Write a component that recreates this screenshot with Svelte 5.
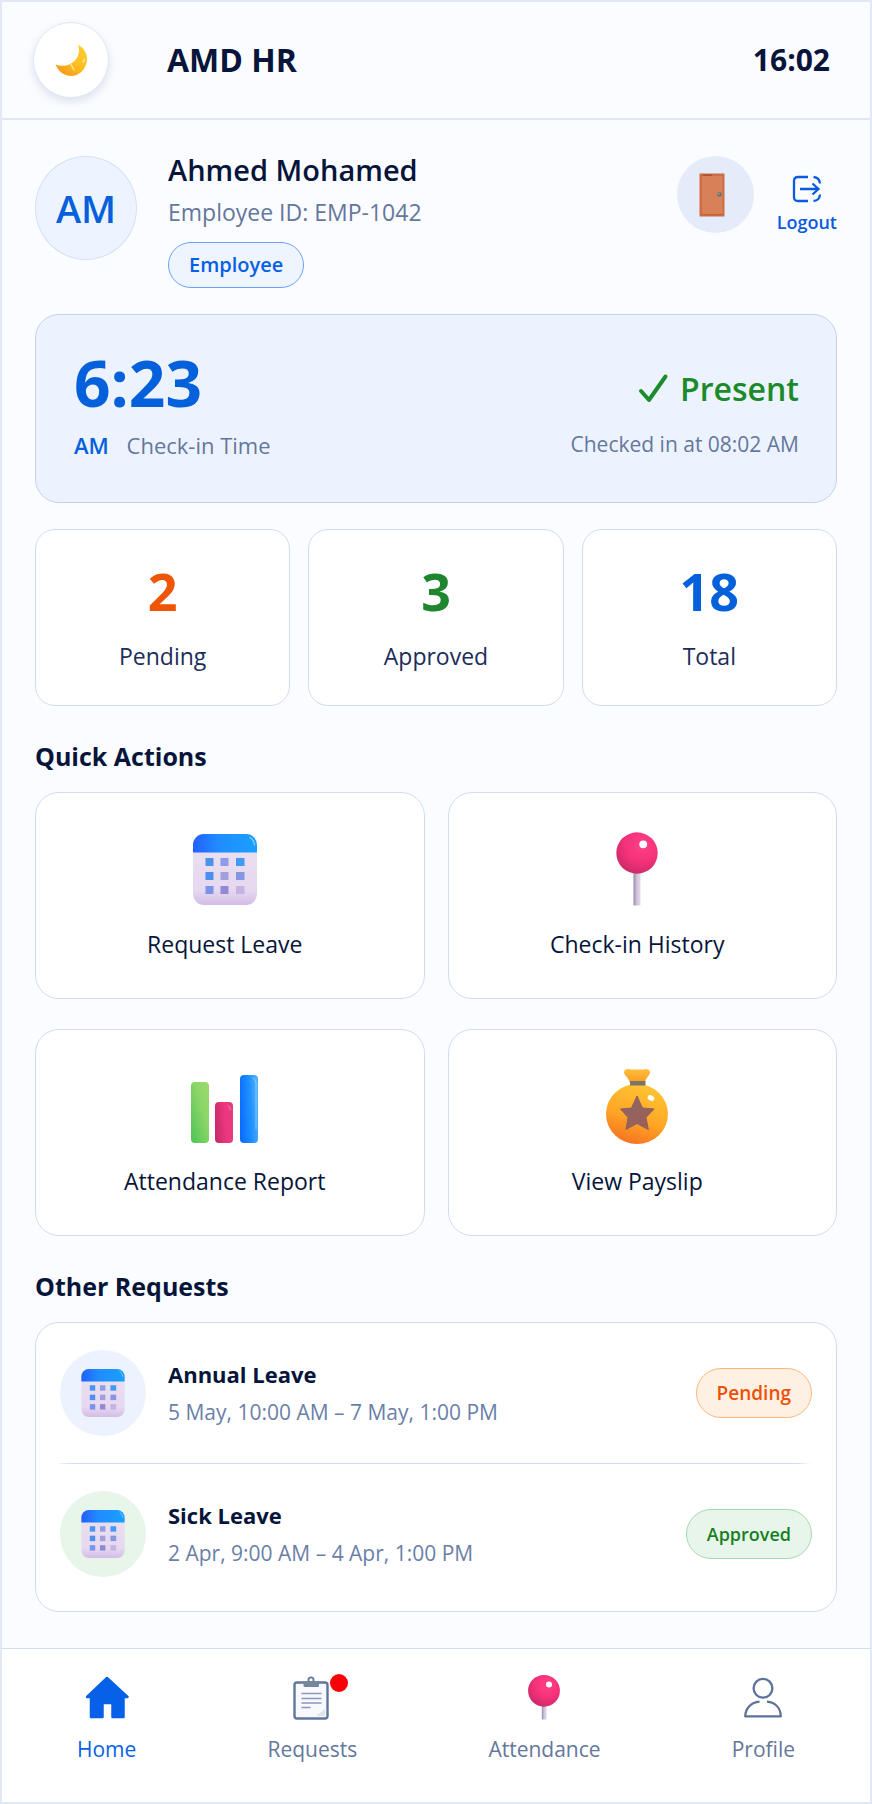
<script lang="ts">
  type Tone = "blue" | "green" | "orange";

  const user = { initials: "AM", name: "Ahmed Mohamed", id: "EMP-1042", role: "Employee" };

  const stats: { value: number; label: string; tone: Tone }[] = [
    { value: 2, label: "Pending", tone: "orange" },
    { value: 3, label: "Approved", tone: "green" },
    { value: 18, label: "Total", tone: "blue" },
  ];

  const actions = [
    { icon: "calendar", label: "Request Leave" },
    { icon: "pin", label: "Check-in History" },
    { icon: "bars", label: "Attendance Report" },
    { icon: "bag", label: "View Payslip" },
  ];

  const requests: { title: string; period: string; status: string; tone: Tone; badge: Tone }[] = [
    { title: "Annual Leave", period: "5 May, 10:00 AM – 7 May, 1:00 PM", status: "Pending", tone: "blue", badge: "orange" },
    { title: "Sick Leave", period: "2 Apr, 9:00 AM – 4 Apr, 1:00 PM", status: "Approved", tone: "green", badge: "green" },
  ];

  const tabs = [
    { icon: "home", label: "Home", alert: false },
    { icon: "clipboard", label: "Requests", alert: true },
    { icon: "pin-small", label: "Attendance", alert: false },
    { icon: "profile", label: "Profile", alert: false },
  ];

  let activeTab = $state("Home");
</script>

{#snippet calendar(width: number, height: number)}
  <svg {width} {height} viewBox="0 0 64 71" aria-hidden="true">
    <rect width="64" height="71" rx="11" fill="url(#cal-body)" />
    <path d="M0 18.500V11A11 11 0 0 1 11 0H53A11 11 0 0 1 64 11V18.500Z" fill="url(#cal-top)" />
    <path d="M57 3.500Q61 6 61.500 11" fill="none" stroke="#8fd0ff" stroke-width="1.200" stroke-linecap="round" />
    <rect x="12.500" y="24" width="8" height="8" fill="#4a94ee" />
    <rect x="27.500" y="24" width="8" height="8" fill="#8c9ce6" />
    <rect x="43" y="24" width="8.500" height="8" fill="#3f9bf6" />
    <rect x="12.500" y="38" width="8" height="8" fill="#4c8fee" />
    <rect x="27.500" y="38" width="8" height="8" fill="#a39fdc" />
    <rect x="43" y="38" width="8.500" height="8" fill="#8795e2" />
    <rect x="12.500" y="52" width="8" height="8" fill="#7a93ea" />
    <rect x="27.500" y="52" width="8" height="8" fill="#9288d6" />
    <rect x="43" y="52" width="8.500" height="8" fill="#c5b3e0" />
  </svg>
{/snippet}

{#snippet icon(name: string)}
  {#if name === "calendar"}
    {@render calendar(64, 71)}
  {:else if name === "pin"}
    <svg width="42" height="74" viewBox="0 0 42 74" aria-hidden="true">
      <rect x="17.500" y="38" width="7" height="35.500" rx="1" fill="url(#stem)" />
      <circle cx="21" cy="21" r="20.700" fill="url(#pin-head)" />
      <circle cx="27.200" cy="12.300" r="3.900" fill="#fff" />
    </svg>
  {:else if name === "bars"}
    <svg width="68" height="74" viewBox="0 0 68 74" aria-hidden="true">
      <rect x="0" y="13" width="18" height="61" rx="4" fill="url(#bar-green)" />
      <rect x="24" y="33" width="18" height="41" rx="4" fill="url(#bar-pink)" />
      <rect x="49" y="6" width="18" height="68" rx="4" fill="url(#bar-blue)" />
      <path d="M37 36.500Q39.500 37 39.500 41M62 9Q65 10 65 14V60" fill="none" stroke="#fff" stroke-opacity=".35" stroke-linecap="round" />
    </svg>
  {:else if name === "bag"}
    <svg width="62" height="75" viewBox="0 0 62 75" aria-hidden="true">
      <path d="M24 14C23 9 17.500 6 18 3C18.500 0 22 -0.500 24.500 .5L38 .5C40 -0.500 43.500 0 44 3C44.500 6 39 9 39 14Z" fill="url(#bag-neck)" />
      <ellipse cx="31" cy="45" rx="31" ry="30" fill="url(#bag-body)" />
      <rect x="24" y="12" width="15.500" height="4.500" fill="#7c7468" />
      <path d="M31 27L36.500 39L48 40L40 48.500L42.300 60.500L31 54.500L20 60.500L22 48.500L14.500 40L25.500 39Z" fill="url(#bag-star)" stroke="#8f5f5c" stroke-linejoin="round" />
      <ellipse cx="45" cy="29" rx="3.500" ry="2.700" fill="#fff" transform="rotate(30 45 29)" />
    </svg>
  {:else if name === "home"}
    <svg width="48" height="48" viewBox="0 0 48 48" aria-hidden="true">
      <path d="M24 5L44.500 24H40.500V44H29.500V31.500Q29.500 30 28 30H21Q19.500 30 19.500 31.500V44H8V24H4L24 5Z" fill="#0761e8" stroke="#0761e8" stroke-width="2.500" stroke-linejoin="round" />
    </svg>
  {:else if name === "clipboard"}
    <svg width="48" height="48" viewBox="0 0 48 48" aria-hidden="true">
      <rect x="6.500" y="9.500" width="33" height="36" rx="2.500" fill="#f8f9fd" stroke="#61769a" stroke-width="2.400" />
      <circle cx="23" cy="7" r="2.600" fill="none" stroke="#61769a" stroke-width="1.800" />
      <rect x="15.500" y="8" width="15.500" height="6" rx="1" fill="#75879f" />
      <path d="M13.500 20.500H33.500M13.500 25.500H33.500M13.500 30H33.500M13.500 34.500H22.500" stroke="#8a97bd" stroke-width="1.700" />
      <path d="M29 42L37 36V43H29Z" fill="#e0e3ef" />
    </svg>
  {:else if name === "pin-small"}
    <svg width="48" height="48" viewBox="0 0 48 48" aria-hidden="true">
      <rect x="21.800" y="32" width="4.800" height="14.500" fill="url(#stem)" />
      <circle cx="24" cy="17.800" r="15.900" fill="url(#pin-head)" />
      <circle cx="29" cy="11.500" r="3" fill="#fff" />
    </svg>
  {:else if name === "profile"}
    <svg width="48" height="48" viewBox="0 0 48 48" fill="none" stroke="#5c7299" stroke-width="2.300" aria-hidden="true">
      <circle cx="24" cy="15.300" r="9.400" />
      <path d="M20.500 28.700C12 29.500 6.500 35 6.200 43.300H41.800C41.500 35 36.500 29.500 28 28.700" stroke-linejoin="round" />
    </svg>
  {/if}
{/snippet}

<!-- shared gradients -->
<svg class="defs" width="0" height="0" aria-hidden="true">
  <defs>
    <linearGradient id="cal-top"><stop offset="0" stop-color="#2260ff" /><stop offset=".4" stop-color="#218cff" /><stop offset="1" stop-color="#18a0ff" /></linearGradient>
    <linearGradient id="cal-body" x1="0" y1="0" x2="0" y2="1"><stop offset=".2" stop-color="#eadff0" /><stop offset=".8" stop-color="#e6d8f0" /><stop offset="1" stop-color="#d3bce6" /></linearGradient>
    <radialGradient id="pin-head" cx=".62" cy=".3" r=".75"><stop offset="0" stop-color="#ff4187" /><stop offset=".55" stop-color="#f5317a" /><stop offset="1" stop-color="#c92a67" /></radialGradient>
    <linearGradient id="stem"><stop offset="0" stop-color="#9487a8" /><stop offset=".45" stop-color="#cdc1d8" /><stop offset="1" stop-color="#e3d9ea" /></linearGradient>
    <linearGradient id="bar-green" x1="0" y1="1" x2="1" y2="0"><stop offset="0" stop-color="#4cc455" /><stop offset=".6" stop-color="#8cd568" /><stop offset="1" stop-color="#9bdc6c" /></linearGradient>
    <linearGradient id="bar-pink" x1="0" y1=".6" x2="1" y2=".4"><stop offset="0" stop-color="#c72c66" /><stop offset=".6" stop-color="#ee3680" /><stop offset="1" stop-color="#e43c7d" /></linearGradient>
    <linearGradient id="bar-blue" x1="0" y1=".6" x2="1" y2=".4"><stop offset="0" stop-color="#0b6bff" /><stop offset=".6" stop-color="#1f93ff" /><stop offset="1" stop-color="#54b0ff" /></linearGradient>
    <linearGradient id="bag-body" x1=".7" y1="0" x2=".35" y2="1"><stop offset="0" stop-color="#ffc533" /><stop offset=".55" stop-color="#ffa827" /><stop offset="1" stop-color="#f5731f" /></linearGradient>
    <linearGradient id="bag-neck" x1="0" y1="0" x2="0" y2="1"><stop offset="0" stop-color="#ffc03a" /><stop offset="1" stop-color="#f79a22" /></linearGradient>
    <linearGradient id="bag-star" x1="0" y1="0" x2="1" y2="1"><stop offset="0" stop-color="#8f6663" /><stop offset="1" stop-color="#9c5f58" /></linearGradient>
    <linearGradient id="moon" x1="1" y1="0" x2=".3" y2="1"><stop offset="0" stop-color="#ffcf2e" /><stop offset=".6" stop-color="#ffbe21" /><stop offset="1" stop-color="#f39a1b" /></linearGradient>
  </defs>
</svg>

<div class="app">
  <header class="topbar">
    <button class="theme-toggle" aria-label="Toggle dark mode">
      <svg width="32" height="32" viewBox="0 0 32 32" aria-hidden="true">
        <path d="M23 .5C29 4 32.500 10 32 16C31 26 24 32 16 32C9 32 3 27 .5 20.500C7 23 15 22 20 16.500C24 12 25 6 23 .5Z" fill="url(#moon)" />
        <path d="M28 18L29.500 15.500M16 20.500L19 26" stroke="#ffe9a0" stroke-width="1.500" stroke-linecap="round" />
      </svg>
    </button>
    <h1>AMD HR</h1>
    <time class="clock">16:02</time>
  </header>

  <main>
    <section class="profile">
      <div class="avatar">{user.initials}</div>
      <div class="profile-info">
        <h2>{user.name}</h2>
        <p>Employee ID: {user.id}</p>
        <span class="role">{user.role}</span>
      </div>
      <button class="door" aria-label="Check out">
        <svg width="26" height="44" viewBox="0 0 26 44" aria-hidden="true">
          <rect x=".5" y=".5" width="25" height="43" fill="#cc6d42" />
          <rect x="3" y="3" width="20.500" height="38" fill="#d88058" />
          <path d="M3 1.500H14L12 3H5Z" fill="#a94f29" />
          <path d="M3 41.500H23.500" stroke="#ad552f" stroke-dasharray="1 1" />
          <circle cx="20.500" cy="21.500" r="2.200" fill="#5b7473" />
          <circle cx="20" cy="21" r=".8" fill="#a9b8b4" />
        </svg>
      </button>
      <button class="logout">
        <svg width="28" height="26" viewBox="0 0 28 26" fill="none" stroke="#0a5be0" stroke-width="2.300" aria-hidden="true">
          <path d="M15 1H5Q1 1 1 5V21Q1 25 5 25H15M7 13H25M19.500 7.500L25.500 13L19.500 18.500M20.500 1Q26.500 1.500 27 7.500M20.500 25Q26.500 24.500 27 18.500" />
        </svg>
        Logout
      </button>
    </section>

    <section class="checkin">
      <div class="checkin-time">
        <strong>6:23</strong>
        <p><span class="meridiem">AM</span> Check-in Time</p>
      </div>
      <div class="checkin-status">
        <div class="present">
          <svg width="29" height="30" viewBox="0 0 29 30" aria-hidden="true">
            <path d="M2 17L10 26L26.500 2.500" fill="none" stroke="#1b8c2b" stroke-width="4" stroke-linecap="round" stroke-linejoin="round" />
          </svg>
          Present
        </div>
        <p>Checked in at 08:02 AM</p>
      </div>
    </section>

    <section class="stats">
      {#each stats as stat (stat.label)}
        <div class="stat">
          <strong class={stat.tone}>{stat.value}</strong>
          <span>{stat.label}</span>
        </div>
      {/each}
    </section>

    <h3>Quick Actions</h3>
    <section class="actions">
      {#each actions as action (action.label)}
        <button class="action">
          <span class="action-icon">{@render icon(action.icon)}</span>
          {action.label}
        </button>
      {/each}
    </section>

    <h3>Other Requests</h3>
    <section class="requests">
      {#each requests as request, i (request.title)}
        {#if i > 0}<hr />{/if}
        <article class="request">
          <span class="request-icon {request.tone}">{@render calendar(44, 48)}</span>
          <div class="request-text">
            <h4>{request.title}</h4>
            <p>{request.period}</p>
          </div>
          <span class="badge {request.badge}">{request.status}</span>
        </article>
      {/each}
    </section>
  </main>

  <nav>
    {#each tabs as tab (tab.label)}
      <button class="tab" class:active={activeTab === tab.label} onclick={() => (activeTab = tab.label)}>
        <span class="tab-icon">
          {@render icon(tab.icon)}
          {#if tab.alert}<span class="dot"></span>{/if}
        </span>
        {tab.label}
      </button>
    {/each}
  </nav>
</div>

<style>
  :global(body) {
    background: #fbfcff;
  }

  .app {
    box-sizing: border-box;
    min-height: 100vh;
    display: flex;
    flex-direction: column;
    border: 2px solid #e0e9f5;
    background: #fbfcff;
    color: #07153a;
    font-family: "Segoe UI", "Open Sans", "Noto Sans", sans-serif;
    font-size: 23px;
    line-height: 32px;
  }

  .app *,
  .app *::before {
    box-sizing: border-box;
  }

  .defs {
    position: absolute;
  }

  svg {
    display: block;
    overflow: visible;
  }

  h1,
  h2,
  h3,
  h4,
  p {
    margin: 0;
  }

  button {
    margin: 0;
    padding: 0;
    border: none;
    background: none;
    color: inherit;
    font: inherit;
    cursor: pointer;
  }

  .topbar {
    display: flex;
    align-items: center;
    padding: 20px 40px 20px 31px;
    border-bottom: 2px solid #e0e8f4;
  }

  .theme-toggle {
    display: grid;
    place-items: center;
    width: 76px;
    height: 76px;
    margin-right: 58px;
    border: 1px solid #e0e8f4;
    border-radius: 50%;
    background: #fff;
    box-shadow: 0 4px 8px rgba(60, 90, 150, 0.16);
  }

  h1,
  .clock {
    font-size: 32px;
    font-weight: 700;
  }

  .clock {
    margin-left: auto;
    font-size: 30px;
  }

  main {
    padding: 36px 33px;
  }

  .profile {
    display: flex;
    align-items: flex-start;
  }

  .avatar {
    display: grid;
    place-items: center;
    width: 102px;
    height: 104px;
    margin-right: 31px;
    border: 1px solid #d3e1f5;
    border-radius: 50%;
    background: #edf4ff;
    color: #0660dc;
    font-size: 38px;
    font-weight: 600;
  }

  .profile-info {
    margin-right: auto;
    color: #64779c;
    line-height: 28px;
  }

  h2 {
    margin-bottom: 14px;
    color: #07153a;
    font-size: 29px;
    font-weight: 600;
  }

  .role {
    display: inline-block;
    margin-top: 16px;
    padding: 8px 20px;
    border: 1px solid #6ca0f5;
    border-radius: 23px;
    background: #eff5ff;
    color: #0760e4;
    font-size: 20px;
    font-weight: 600;
  }

  .door {
    display: grid;
    place-items: center;
    width: 77px;
    height: 77px;
    margin-right: 23px;
    padding-right: 6px;
    border-radius: 50%;
    background: #e3ecf8;
  }

  .logout {
    display: flex;
    flex-direction: column;
    align-items: center;
    gap: 8px;
    padding-top: 20px;
    color: #0a5be0;
    font-size: 18px;
    font-weight: 600;
    line-height: 24px;
  }

  .checkin {
    display: flex;
    justify-content: space-between;
    align-items: flex-end;
    margin-top: 26px;
    padding: 36px 37px 41px 38px;
    border: 1px solid #bfd3f1;
    border-radius: 24px;
    background: #edf3fe;
    color: #64779c;
    font-size: 22px;
  }

  .checkin-time strong {
    display: block;
    margin-bottom: 14px;
    color: #0560db;
    font-size: 64px;
    line-height: 64px;
  }

  .meridiem {
    margin-right: 12px;
    color: #0560db;
    font-weight: 600;
  }

  .checkin-status {
    display: flex;
    flex-direction: column;
    align-items: flex-end;
    gap: 18px;
    font-size: 21px;
    line-height: 34px;
  }

  .present {
    display: flex;
    align-items: center;
    gap: 12px;
    color: #1b8a2b;
    font-size: 32px;
    font-weight: 600;
    line-height: 40px;
  }

  .stats {
    display: grid;
    grid-template-columns: repeat(3, 1fr);
    gap: 18px;
    margin-top: 26px;
  }

  .stat,
  .action,
  .requests {
    border: 1px solid #d0ddf0;
    border-radius: 24px;
    background: #fff;
  }

  .stat {
    display: flex;
    flex-direction: column;
    align-items: center;
    gap: 21px;
    padding: 33px 0;
    border-radius: 20px;
    color: #1c2d59;
  }

  .stat strong {
    font-size: 52px;
    line-height: 56px;
  }

  .stat .orange {
    color: #ee5507;
  }

  .stat .green {
    color: #1f862d;
  }

  .stat .blue {
    color: #0560db;
  }

  h3 {
    margin: 34px 0 20px;
    font-size: 25px;
    font-weight: 700;
  }

  .actions {
    display: grid;
    grid-template-columns: repeat(2, 1fr);
    gap: 30px 23px;
  }

  .action {
    display: flex;
    flex-direction: column;
    align-items: center;
    gap: 22px;
    padding: 39px 10px 38px 0;
  }

  .action-icon {
    display: grid;
    place-items: center;
    height: 74px;
  }

  .requests {
    padding: 0 24px 7px;
  }

  .request {
    display: flex;
    align-items: center;
    padding: 27px 0;
  }

  .request-icon {
    display: grid;
    place-items: center;
    width: 86px;
    height: 86px;
    margin-right: 22px;
    border-radius: 50%;
  }

  .request-icon.blue {
    background: #edf3fe;
  }

  .request-icon.green {
    background: #e8f5e9;
  }

  .request-text {
    margin-right: auto;
    color: #6a7fa8;
    line-height: 28px;
  }

  .request-text p {
    font-size: 21px;
  }

  h4 {
    margin-bottom: 10px;
    color: #07153a;
    font-size: 22px;
    font-weight: 700;
  }

  hr {
    height: 1px;
    margin: 0;
    border: none;
    background: linear-gradient(90deg, #edf2f9, #d0dcee 2%, #d0dcee 98%, #fff);
  }

  .badge {
    padding: 10px 20px;
    border: 1px solid;
    border-radius: 25px;
    font-size: 19px;
    font-weight: 600;
    line-height: 28px;
  }

  .badge.orange {
    border-color: #fbb879;
    background: #fff0e4;
    color: #ed5106;
  }

  .badge.green {
    border-color: #a5d9ae;
    background: #e8f5ea;
    color: #16801f;
    font-size: 18px;
  }

  nav {
    display: flex;
    justify-content: space-between;
    margin-top: auto;
    padding: 24px 75px 39px;
    border-top: 1px solid #d3dfef;
    background: #fff;
  }

  .tab {
    display: flex;
    flex-direction: column;
    align-items: center;
    gap: 14px;
    color: #64779c;
    font-size: 21px;
    line-height: 28px;
  }

  .tab.active {
    color: #0761e8;
  }

  .tab-icon {
    position: relative;
  }

  .dot {
    position: absolute;
    top: 1px;
    right: -12px;
    width: 18px;
    height: 18px;
    border-radius: 50%;
    background: #fb0007;
  }
</style>
